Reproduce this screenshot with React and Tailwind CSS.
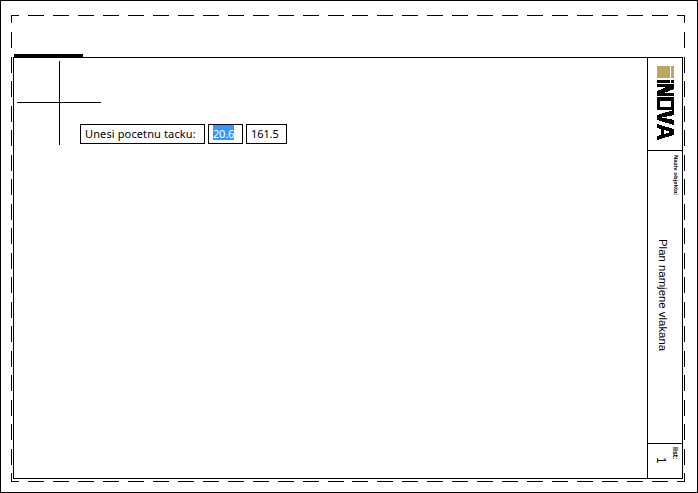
export default function App() {
  const sans = { fontFamily: '"Noto Sans", Tahoma, sans-serif' };
  const arial = { fontFamily: '"Liberation Sans", sans-serif' };
  return (
    <div className="relative box-border h-[493px] w-[698px] overflow-hidden border border-black bg-white">
      {/* dashed sheet outline */}
      <svg className="absolute left-[-1px] top-[-1px]" width="698" height="493" shapeRendering="crispEdges">
        <g stroke="#000" fill="none">
          <path d="M11.5 23V15.5H19" />
          <path d="M28 15.5H669" strokeDasharray="16 8.96" />
          <path d="M677 15.5H684.5V23" />
          <path d="M11.5 32V465" strokeDasharray="16 8.53" />
          <path d="M11.5 473V481.5H19" />
          <path d="M28 481.5H669" strokeDasharray="16 8.96" />
          <path d="M677 481.5H684.5V473" />
          <path d="M684.5 32V465" strokeDasharray="16 8.53" />
        </g>
      </svg>

      <div className="relative ml-[12px] mt-[56px] box-border flex h-[422px] w-[670px] border border-black">
        <div className="absolute left-0 top-[-4px] h-[4px] w-[69px] bg-black" />

        <div className="relative flex-1">
          <svg className="absolute left-[3px] top-[3px]" width="84" height="84" shapeRendering="crispEdges">
            <path d="M42.5 0V84M0 41.5H84" stroke="#000" fill="none" />
          </svg>
          <div className="absolute left-[66px] top-[66px] flex items-stretch gap-[3px] text-[11px] leading-[17px] text-black" style={sans}>
            <div className="box-border h-[20px] w-[125px] border border-black pl-[4px] tracking-[0.12px]">Unesi pocetnu tacku:</div>
            <div className="box-border h-[20px] w-[35px] border border-black pl-[4px]">
              <span className="inline-block h-[15px] w-[21px] overflow-hidden bg-[#3399ff] tracking-[-0.2px] text-white">20.6</span>
            </div>
            <div className="box-border h-[20px] w-[41px] border border-black pl-[4px] tracking-[-0.1px]">161.5</div>
          </div>
        </div>

        <div className="box-border flex w-[35px] flex-col border-l border-black">
          <div className="box-border flex h-[93px] shrink-0 justify-center border-b border-black pt-[8px]">
            <svg width="18" height="75" viewBox="0 0 18 75" shapeRendering="crispEdges" className="ml-[2px]">
              <rect x="0" y="0" width="13" height="12" fill="#bda364" />
              <rect x="14" y="0" width="3" height="12" fill="#bda364" />
              <path d="M0 14H13V17H0ZM14 14H17V17H14Z" fill="#000" />
              <path d="M0 18H17V21H0ZM0 27H17V30H0ZM17 18V23L0 30V25Z" fill="#000" />
              <path fillRule="evenodd" d="M0 31H17V44H0ZM3 34.5V40.5H14V34.5Z" fill="#000" />
              <path d="M17 44V49L5 51.5L17 54V59L0 54V49Z" fill="#000" />
              <path fillRule="evenodd" d="M0 58L17 63V69L0 74V70L4 69V63L0 62ZM7 63.5V68.5L13 66Z" fill="#000" />
            </svg>
          </div>
          <div className="flex min-h-0 flex-1">
            <div className="flex w-[24px] justify-center pl-[6px] pt-[88px]">
              <span className="h-fit text-[11.4px] leading-[12px] text-black [writing-mode:vertical-rl]" style={arial}>
                Plan namjene vlakana
              </span>
            </div>
            <div className="flex flex-1 justify-start pt-[4px]">
              <span className="h-fit text-[6px] font-bold leading-[7px] text-black [writing-mode:vertical-rl]" style={arial}>
                Naziv objekta:
              </span>
            </div>
          </div>
          <div className="box-border flex h-[35px] shrink-0 border-t border-black">
            <div className="flex w-[24px] justify-center pl-[2px] pt-[13px]">
              <span className="h-fit text-[12px] leading-[12px] text-black [writing-mode:vertical-rl]" style={arial}>1</span>
            </div>
            <div className="flex flex-1 justify-start pt-[3px]">
              <span className="h-fit text-[7px] font-bold leading-[7px] text-black [writing-mode:vertical-rl]" style={arial}>list:</span>
            </div>
          </div>
        </div>
      </div>
    </div>
  );
}
